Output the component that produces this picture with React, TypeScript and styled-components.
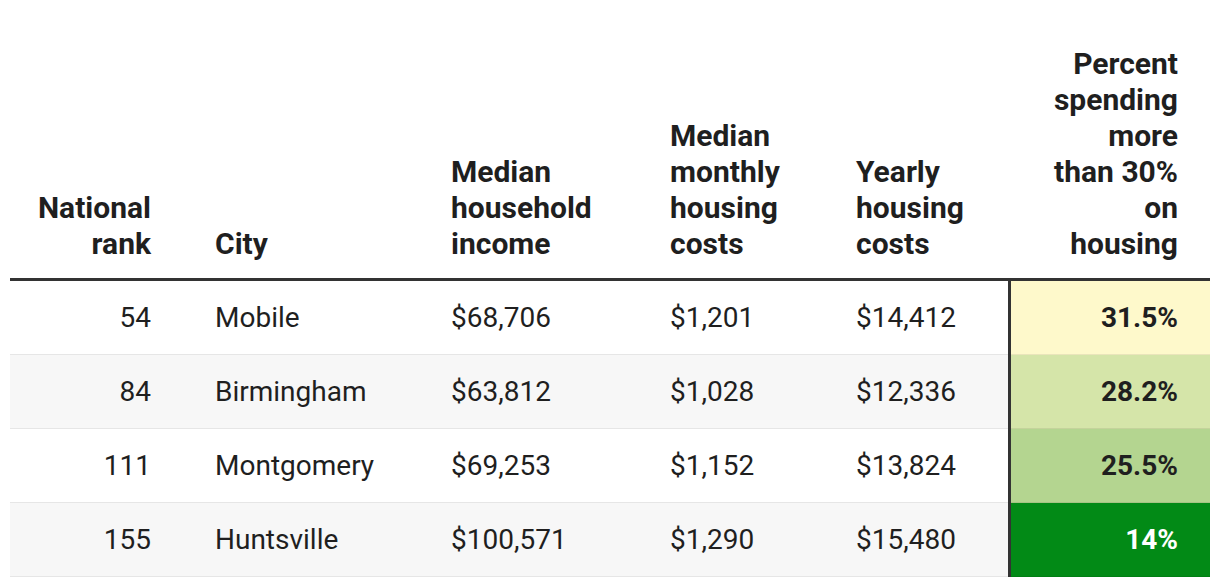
import React from "react";
import styled, { createGlobalStyle } from "styled-components";

const Global = createGlobalStyle`
  html, body { margin: 0; padding: 0; background: #ffffff; }
  body { font-family: Roboto, "Liberation Sans", Arial, sans-serif; color: #1f1f1f; }
`;

const Wrap = styled.div`
  padding: 30px 10px 0 10px;
`;

const Table = styled.table`
  width: 1200px;
  border-collapse: collapse;
  table-layout: fixed;
`;

const Th = styled.th<{ $align: "left" | "right" }>`
  font-size: 30px;
  line-height: 36px;
  font-weight: 700;
  color: #1f1f1f;
  text-align: ${(p) => p.$align};
  vertical-align: bottom;
  padding: 16px ${(p) => (p.$align === "right" ? "32px" : "0")} 16px ${(p) => (p.$align === "left" ? "32px" : "0")};
  border-bottom: 3px solid #333333;
`;

const Tr = styled.tr<{ $stripe: boolean }>`
  background: ${(p) => (p.$stripe ? "#f7f7f7" : "#ffffff")};
`;

const Td = styled.td<{ $align: "left" | "right" }>`
  font-size: 28px;
  line-height: 36px;
  font-weight: 400;
  color: #1f1f1f;
  text-align: ${(p) => p.$align};
  padding: 19px ${(p) => (p.$align === "right" ? "32px" : "0")} 18px ${(p) => (p.$align === "left" ? "32px" : "0")};
  border-bottom: 1px solid #e6e6e6;
  white-space: nowrap;
`;

const PctTd = styled.td<{ $bg: string; $fg: string }>`
  font-size: 28px;
  line-height: 36px;
  font-weight: 700;
  text-align: right;
  padding: 19px 32px 18px 0;
  background: ${(p) => p.$bg};
  color: ${(p) => p.$fg};
  border-left: 3px solid #333333;
  border-bottom: 1px solid rgba(0, 0, 0, 0.08);
`;

const rows = [
  { rank: "54", city: "Mobile", income: "$68,706", monthly: "$1,201", yearly: "$14,412", pct: "31.5%", bg: "#fef9cb", fg: "#1f1f1f" },
  { rank: "84", city: "Birmingham", income: "$63,812", monthly: "$1,028", yearly: "$12,336", pct: "28.2%", bg: "#d5e5a9", fg: "#1f1f1f" },
  { rank: "111", city: "Montgomery", income: "$69,253", monthly: "$1,152", yearly: "$13,824", pct: "25.5%", bg: "#b4d590", fg: "#1f1f1f" },
  { rank: "155", city: "Huntsville", income: "$100,571", monthly: "$1,290", yearly: "$15,480", pct: "14%", bg: "#028a16", fg: "#ffffff" },
];

export default function App() {
  return (
    <>
      <Global />
      <Wrap>
        <Table>
          <colgroup>
            <col style={{ width: 173 }} />
            <col style={{ width: 236 }} />
            <col style={{ width: 219 }} />
            <col style={{ width: 186 }} />
            <col style={{ width: 185 }} />
            <col style={{ width: 201 }} />
          </colgroup>
          <thead>
            <tr>
              <Th $align="right">National<br />rank</Th>
              <Th $align="left">City</Th>
              <Th $align="left">Median<br />household<br />income</Th>
              <Th $align="left">Median<br />monthly<br />housing<br />costs</Th>
              <Th $align="left">Yearly<br />housing<br />costs</Th>
              <Th $align="right">Percent<br />spending<br />more<br />than 30%<br />on<br />housing</Th>
            </tr>
          </thead>
          <tbody>
            {rows.map((r, i) => (
              <Tr key={r.rank} $stripe={i % 2 === 1}>
                <Td $align="right">{r.rank}</Td>
                <Td $align="left">{r.city}</Td>
                <Td $align="left">{r.income}</Td>
                <Td $align="left">{r.monthly}</Td>
                <Td $align="left">{r.yearly}</Td>
                <PctTd $bg={r.bg} $fg={r.fg}>{r.pct}</PctTd>
              </Tr>
            ))}
          </tbody>
        </Table>
      </Wrap>
    </>
  );
}
